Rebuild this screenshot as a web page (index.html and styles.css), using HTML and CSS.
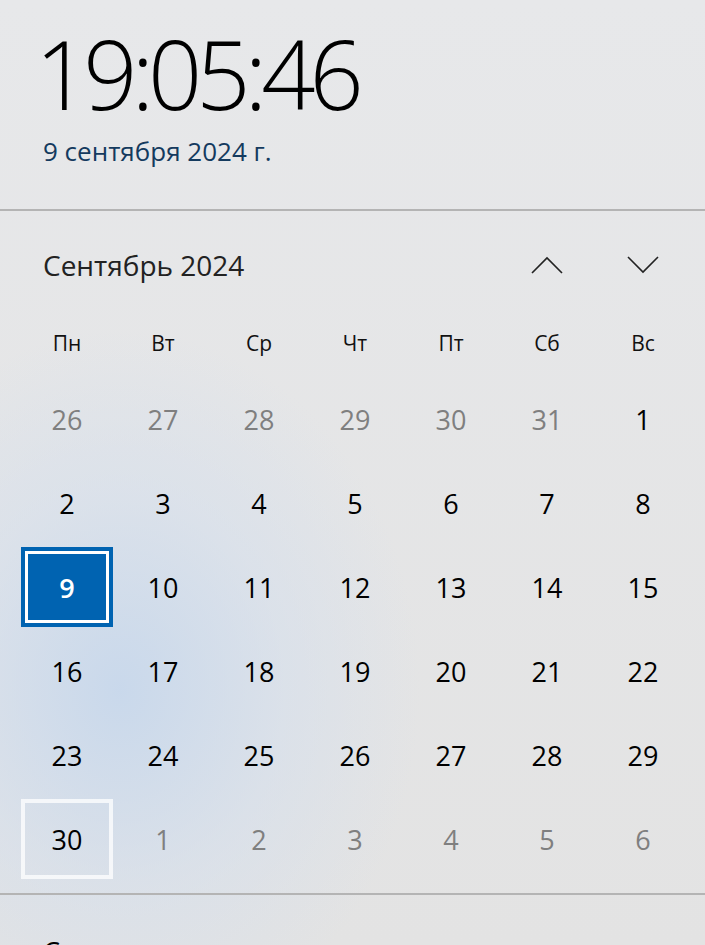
FILE: index.html
```html
<!DOCTYPE html>
<html lang="ru">
<head>
  <meta charset="UTF-8">
  <meta name="viewport" content="width=device-width, initial-scale=1.0">
  <link rel="stylesheet" href="styles.css">
  <title>Календарь</title>
</head>
<body>
  <div class="flyout">
    <div class="clock">
      <div class="time">19:05:46</div>
      <div class="date">9 сентября 2024 г.</div>
    </div>

    <div class="calendar">
      <div class="cal-head">
        <div class="month">Сентябрь 2024</div>
        <div class="nav">
          <button class="nav-btn" aria-label="Предыдущий месяц">
            <svg width="32" height="18" viewBox="0 0 32 18"><path d="M1 17 L16 2 L31 17" fill="none" stroke="#222" stroke-width="1.6"/></svg>
          </button>
          <button class="nav-btn" aria-label="Следующий месяц">
            <svg width="32" height="18" viewBox="0 0 32 18"><path d="M1 1 L16 16 L31 1" fill="none" stroke="#222" stroke-width="1.6"/></svg>
          </button>
        </div>
      </div>

      <div class="grid">
        <div class="wd">Пн</div><div class="wd">Вт</div><div class="wd">Ср</div><div class="wd">Чт</div><div class="wd">Пт</div><div class="wd">Сб</div><div class="wd">Вс</div>

        <div class="day other"><span>26</span></div>
        <div class="day other"><span>27</span></div>
        <div class="day other"><span>28</span></div>
        <div class="day other"><span>29</span></div>
        <div class="day other"><span>30</span></div>
        <div class="day other"><span>31</span></div>
        <div class="day"><span>1</span></div>

        <div class="day"><span>2</span></div>
        <div class="day"><span>3</span></div>
        <div class="day"><span>4</span></div>
        <div class="day"><span>5</span></div>
        <div class="day"><span>6</span></div>
        <div class="day"><span>7</span></div>
        <div class="day"><span>8</span></div>

        <div class="day today"><span>9</span></div>
        <div class="day"><span>10</span></div>
        <div class="day"><span>11</span></div>
        <div class="day"><span>12</span></div>
        <div class="day"><span>13</span></div>
        <div class="day"><span>14</span></div>
        <div class="day"><span>15</span></div>

        <div class="day"><span>16</span></div>
        <div class="day"><span>17</span></div>
        <div class="day"><span>18</span></div>
        <div class="day"><span>19</span></div>
        <div class="day"><span>20</span></div>
        <div class="day"><span>21</span></div>
        <div class="day"><span>22</span></div>

        <div class="day"><span>23</span></div>
        <div class="day"><span>24</span></div>
        <div class="day"><span>25</span></div>
        <div class="day"><span>26</span></div>
        <div class="day"><span>27</span></div>
        <div class="day"><span>28</span></div>
        <div class="day"><span>29</span></div>

        <div class="day hover"><span>30</span></div>
        <div class="day other"><span>1</span></div>
        <div class="day other"><span>2</span></div>
        <div class="day other"><span>3</span></div>
        <div class="day other"><span>4</span></div>
        <div class="day other"><span>5</span></div>
        <div class="day other"><span>6</span></div>
      </div>
    </div>

    <div class="agenda">
      <div class="agenda-title">Сегодня</div>
    </div>
  </div>
</body>
</html>
```

FILE: styles.css
```css
html, body {
  margin: 0;
  padding: 0;
}

body {
  width: 705px;
  height: 945px;
  overflow: hidden;
  font-family: "Open Sans", "Noto Sans", sans-serif;
  color: #000;
}

.flyout {
  height: 945px;
  background:
    radial-gradient(ellipse 300px 360px at 120px 690px, rgba(198, 215, 236, 0.9), rgba(210, 222, 238, 0.5) 55%, rgba(228, 228, 228, 0) 100%),
    linear-gradient(#e7e8ea, #e3e3e3);
}

.clock {
  height: 211px;
  box-sizing: border-box;
  padding: 23px 0 0 35px;
  border-bottom: 2px solid #b4b4b4;
}

.time {
  font-size: 95px;
  font-weight: 300;
  line-height: 100px;
  letter-spacing: -6px;
  font-stretch: 88%;
}

.date {
  margin: 11px 0 0 8px;
  font-size: 26px;
  line-height: 34px;
  color: #143a5e;
  font-stretch: 90%;
}

.cal-head {
  height: 98px;
  box-sizing: border-box;
  padding: 10px 0 0 43px;
  display: flex;
  align-items: center;
  justify-content: space-between;
}

.month {
  font-size: 28px;
  color: #222;
  font-stretch: 88%;
}

.nav {
  display: flex;
  gap: 34px;
  margin-right: 31px;
}

.nav-btn {
  width: 62px;
  height: 40px;
  padding: 0;
  border: none;
  background: none;
  display: flex;
  align-items: center;
  justify-content: center;
}

.grid {
  display: grid;
  grid-template-columns: repeat(7, 96px);
  grid-template-rows: 68px;
  grid-auto-rows: 84px;
  padding-left: 19px;
}

.wd {
  display: flex;
  align-items: center;
  justify-content: center;
  font-size: 21px;
  color: #111;
}

.day {
  padding: 2px;
  box-sizing: border-box;
}

.day span {
  height: 80px;
  box-sizing: border-box;
  display: flex;
  align-items: center;
  justify-content: center;
  font-size: 27px;
  color: #000;
  font-stretch: 90%;
}

.day.other span {
  color: #7f7f7f;
}

.day.today span {
  background: #0063b1;
  border: 4px solid #0063b1;
  box-shadow: inset 0 0 0 3px #fff;
  color: #fff;
  font-weight: 600;
}

.day.hover span {
  border: 4px solid rgba(255, 255, 255, 0.75);
}

.agenda {
  margin-top: 12px;
  border-top: 2px solid #b4b4b4;
  padding: 38px 0 0 43px;
}

.agenda-title {
  font-size: 27px;
  color: #000;
}
```
